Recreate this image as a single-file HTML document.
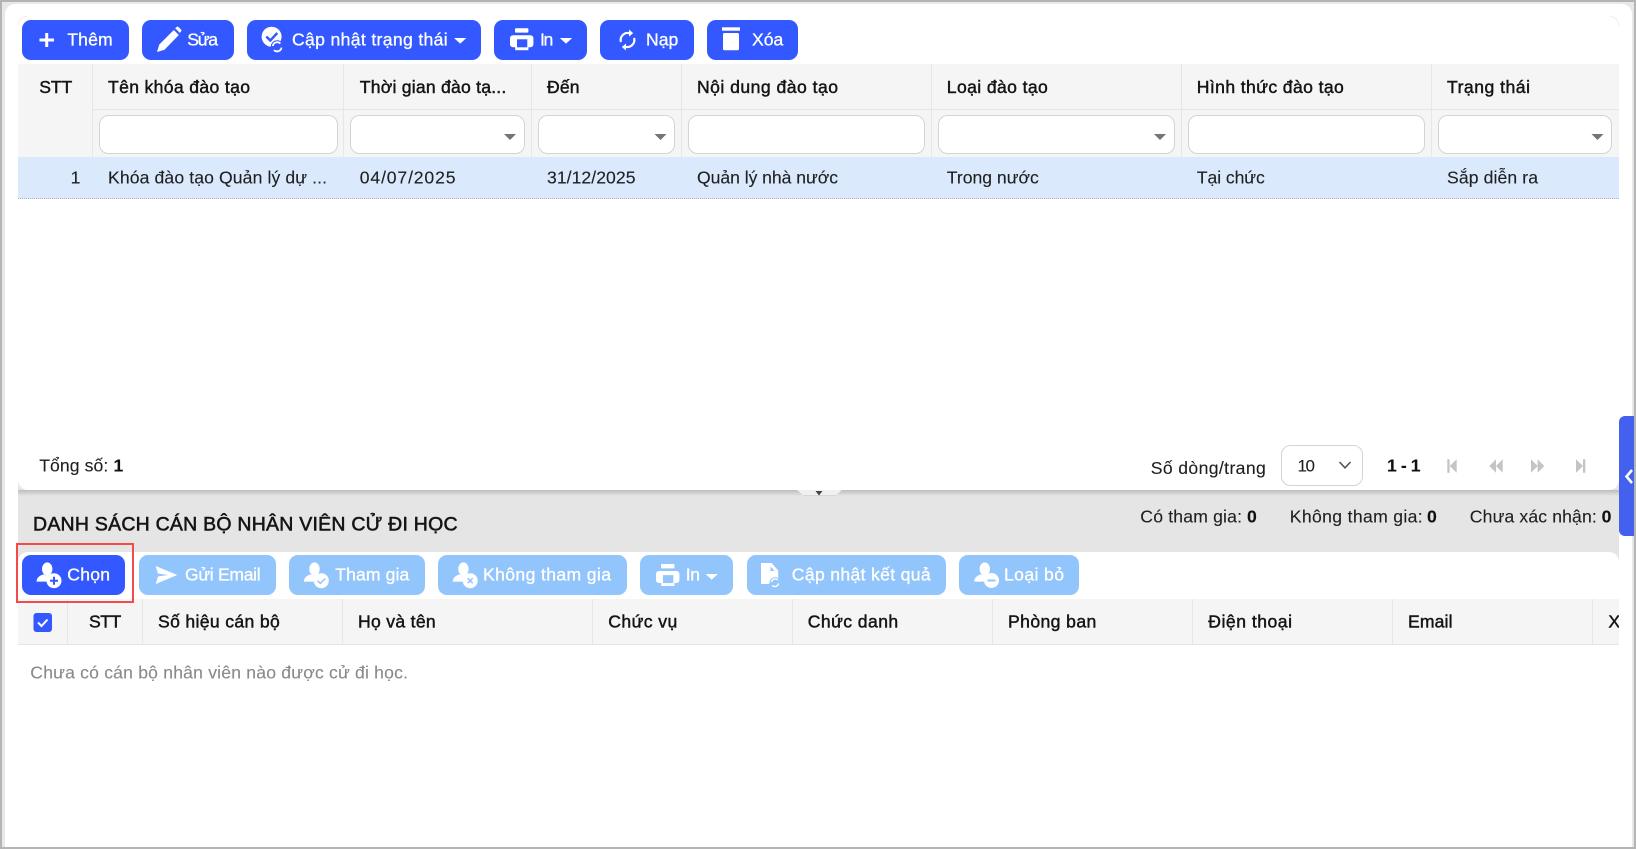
<!DOCTYPE html>
<html lang="vi"><head><meta charset="utf-8"><title>Khóa đào tạo</title>
<style>
html,body{margin:0;padding:0;width:1636px;height:849px;overflow:hidden;background:#fff}
svg{display:block}
text{font-family:"Liberation Sans","Noto Sans CJK SC",sans-serif;font-size:17.6px;fill:#1f1f1f;stroke:#1f1f1f;stroke-width:.12px}
.m{stroke:#141414;stroke-width:.45px;fill:#141414}
.b{font-weight:700;fill:#111;stroke:#111;stroke-width:.1px}
.w{fill:#fff;stroke:#fff;stroke-width:.3px}
.ln{stroke:#e6e6e6;stroke-width:1}
.in{fill:#fff;stroke:#d4d4d4;stroke-width:1}
.cr{fill:#757575}
.pg{fill:#c4c4c4}
</style></head><body>
<svg xmlns="http://www.w3.org/2000/svg" width="1636" height="849" viewBox="0 0 1636 849">
<defs>
<clipPath id="cl"><rect x="18" y="599" width="1601" height="47"/></clipPath>
<g id="person" fill="#fff"><ellipse cx="47.200" cy="569" rx="5.200" ry="6.600"/><path d="M36.500 581.600c.4-4 3-6.200 7.200-7.200 1.500 1.400 5 1.400 6.500.4l2 1.200c-2.600 1.400-3.600 3.400-3.600 5.600z"/></g>
<g id="print" fill="#fff"><rect x="0" y="7" width="23.400" height="12" rx="3"/><rect x="5" y="0" width="13.400" height="4.400" rx=".8"/><rect x="5.200" y="9.600" width="13.200" height="12.400"/></g>
<linearGradient id="sh" x1="0" y1="0" x2="0" y2="1"><stop offset="0" stop-color="#bdbdbd"/><stop offset="1" stop-color="#e5e5e5"/></linearGradient>
</defs>

<!-- page frame -->
<rect width="1636" height="849" fill="#b4b4b4"/>
<rect x="2" y="2" width="1632" height="845" fill="#e8e8e8"/>
<path d="M15 4H1622a10 10 0 0 1 10 10V847H5V14A10 10 0 0 1 15 4z" fill="#fff"/>
<path d="M18 26a10 10 0 0 1 10-10M1609 16a10 10 0 0 1 10 10" fill="none" stroke="#efefef"/>

<!-- top toolbar -->
<g fill="#3358ff">
<rect x="22" y="20" width="107" height="40" rx="9"/>
<rect x="142" y="20" width="92" height="40" rx="9"/>
<rect x="247" y="20" width="234" height="40" rx="9"/>
<rect x="494" y="20" width="93" height="40" rx="9"/>
<rect x="600" y="20" width="94" height="40" rx="9"/>
<rect x="707" y="20" width="91" height="40" rx="9"/>
</g>
<path d="M39.500 40H54M46.700 33v14" stroke="#fff" stroke-width="3" fill="none"/>
<text class="w" x="67.300" y="45.500" textLength="45.400" lengthAdjust="spacing">Thêm</text>
<path d="M157 52l2.300-7.500L173.800 30l5 5L164.500 49.700z" fill="#fff"/>
<path d="M175.200 28.200l1.400-1.200q1-.7 1.900 0l2.600 2.600q.8.900 0 1.900l-1.300 1.400z" fill="#fff"/>
<text class="w" x="187.300" y="45.500" textLength="30.700" lengthAdjust="spacing">Sửa</text>
<circle cx="271.600" cy="36.700" r="10" fill="#fff"/>
<path d="M266.300 36.500l4 4 7-7.500" stroke="#3358ff" stroke-width="2.400" fill="none"/>
<circle cx="277.200" cy="46.800" r="6.500" fill="#3358ff"/>
<path d="M272.800 46a4.500 4.500 0 0 1 7.600-2.500M281.500 47.600a4.500 4.500 0 0 1-7.600 2.500" stroke="#fff" stroke-width="1.800" fill="none"/>
<text class="w" x="292" y="45.500" textLength="155.700" lengthAdjust="spacing">Cập nhật trạng thái</text>
<path d="M454 38h12.400l-6.200 5.600z" fill="#fff"/>
<use href="#print" x="510" y="28.200"/>
<rect x="517" y="39.300" width="10.300" height="8" fill="#3358ff"/>
<text class="w" x="540" y="45.500" textLength="13.300" lengthAdjust="spacing">In</text>
<path d="M559.800 38h12.400l-6.200 5.600z" fill="#fff"/>
<path d="M621 42A7 7 0 0 1 629.500 33.200M634 38A7 7 0 0 1 625.500 46.800" stroke="#fff" stroke-width="2.200" fill="none"/>
<path d="M629 29.500l4.200 3.600-4.200 3.500zM626 43.500l-4.200 3.500 4.200 3.500z" fill="#fff"/>
<text class="w" x="646" y="45.500" textLength="32.300" lengthAdjust="spacing">Nạp</text>
<rect x="722" y="27.300" width="18" height="3.400" fill="#fff"/>
<rect x="723" y="33" width="16" height="17.300" rx="1.500" fill="#fff"/>
<text class="w" x="752" y="45.500" textLength="31.300" lengthAdjust="spacing">Xóa</text>

<!-- table 1 -->
<rect x="18" y="64" width="1601" height="93" fill="#f5f5f5"/>
<rect x="18" y="157" width="1601" height="42" fill="#dbe9fd"/>
<path d="M18 198.500H1619" stroke="#a9b6c6" stroke-dasharray="1 1"/>
<path class="ln" d="M92.500 64V157M343.500 64V157M531.500 64V157M681.500 64V157M931.500 64V157M1181.500 64V157M1431.500 64V157M92.500 109.500H1619"/>
<text class="m" x="39.200" y="93" textLength="33" lengthAdjust="spacing">STT</text>
<text class="m" x="108" y="93" textLength="142" lengthAdjust="spacing">Tên khóa đào tạo</text>
<text class="m" x="359.800" y="93" textLength="146.500" lengthAdjust="spacing">Thời gian đào tạ...</text>
<text class="m" x="547" y="93" textLength="32.500" lengthAdjust="spacing">Đến</text>
<text class="m" x="697" y="93" textLength="141" lengthAdjust="spacing">Nội dung đào tạo</text>
<text class="m" x="946.800" y="93" textLength="101" lengthAdjust="spacing">Loại đào tạo</text>
<text class="m" x="1196.800" y="93" textLength="147" lengthAdjust="spacing">Hình thức đào tạo</text>
<text class="m" x="1447" y="93" textLength="83" lengthAdjust="spacing">Trạng thái</text>
<rect class="in" x="99.500" y="115.500" width="238" height="38" rx="9"/>
<rect class="in" x="350.500" y="115.500" width="174" height="38" rx="9"/>
<rect class="in" x="538.500" y="115.500" width="136" height="38" rx="9"/>
<rect class="in" x="688.500" y="115.500" width="236" height="38" rx="9"/>
<rect class="in" x="938.500" y="115.500" width="236" height="38" rx="9"/>
<rect class="in" x="1188.500" y="115.500" width="236" height="38" rx="9"/>
<rect class="in" x="1438.500" y="115.500" width="173" height="38" rx="9"/>
<path class="cr" d="M504 134h12l-6 6zM654.500 134h12l-6 6zM1154 134h12l-6 6zM1591.500 134h12l-6 6z"/>
<text x="70.600" y="183.500" textLength="7.400" lengthAdjust="spacing">1</text>
<text x="108" y="183.500" textLength="219" lengthAdjust="spacing">Khóa đào tạo Quản lý dự ...</text>
<text x="359.800" y="183.500" textLength="95.700" lengthAdjust="spacing">04/07/2025</text>
<text x="547" y="183.500" textLength="88.500" lengthAdjust="spacing">31/12/2025</text>
<text x="697" y="183.500" textLength="141" lengthAdjust="spacing">Quản lý nhà nước</text>
<text x="946.800" y="183.500" textLength="92" lengthAdjust="spacing">Trong nước</text>
<text x="1196.800" y="183.500" textLength="68" lengthAdjust="spacing">Tại chức</text>
<text x="1447" y="183.500" textLength="91" lengthAdjust="spacing">Sắp diễn ra</text>

<!-- gray band + lower panel -->
<rect x="18" y="480" width="1601" height="90" fill="#e5e5e5"/>
<rect x="18" y="490" width="1601" height="6" fill="url(#sh)"/>
<path d="M18 476H1619V480A10 10 0 0 1 1609 490H28A10 10 0 0 1 18 480z" fill="#fff"/>
<path d="M797 490H842L836 495H803z" fill="#f0f0f0"/>
<path d="M803 495.500H836" stroke="#d6d6d6"/>
<path d="M815.500 491h7l-3.500 4.500z" fill="#444"/>
<path d="M18 562a10 10 0 0 1 10-10H1609a10 10 0 0 1 10 10V600H18z" fill="#fff"/>

<!-- pagination -->
<text x="39.200" y="471.500" textLength="69.100" lengthAdjust="spacing">Tổng số:</text>
<text class="b" x="113.500" y="471.500" textLength="7.800" lengthAdjust="spacing">1</text>
<text x="1150.700" y="474" textLength="115.100" lengthAdjust="spacing">Số dòng/trang</text>
<rect x="1281.500" y="445.500" width="81" height="40" rx="9" fill="#fff" stroke="#d4d4d4"/>
<text x="1297.500" y="471.500" style="font-size:17px" textLength="17.500" lengthAdjust="spacing">10</text>
<path d="M1339.500 462l5.500 5.800 5.500-5.800" fill="none" stroke="#555" stroke-width="1.600"/>
<text class="b" x="1387" y="471.500" textLength="33.600" lengthAdjust="spacing">1 - 1</text>
<path class="pg" d="M1447.300 459.300h2.300v13.400h-2.300zM1456.700 459.300v13.400l-7-6.700z"/>
<path class="pg" d="M1496 459.300v13.400l-6.700-6.700zM1502.700 459.300v13.400l-6.700-6.700z"/>
<path class="pg" d="M1531 459.300v13.400l6.700-6.700zM1537.600 459.300v13.400l6.700-6.700z"/>
<path class="pg" d="M1576 459.300v13.400l7-6.700zM1583 459.300h2.300v13.400H1583z"/>

<!-- title + stats -->
<text class="m" style="font-size:19.500px;stroke-width:.55px" x="33" y="530.700" textLength="424.600" lengthAdjust="spacing">DANH SÁCH CÁN BỘ NHÂN VIÊN CỬ ĐI HỌC</text>
<text x="1140.300" y="522.700" textLength="101.700" lengthAdjust="spacing">Có tham gia:</text>
<text class="b" x="1247" y="522.700" textLength="11" lengthAdjust="spacing">0</text>
<text x="1289.800" y="522.700" textLength="132.900" lengthAdjust="spacing">Không tham gia:</text>
<text class="b" x="1427" y="522.700" textLength="11" lengthAdjust="spacing">0</text>
<text x="1469.800" y="522.700" textLength="127" lengthAdjust="spacing">Chưa xác nhận:</text>
<text class="b" x="1601.600" y="522.700" textLength="10.600" lengthAdjust="spacing">0</text>

<!-- lower toolbar -->
<g fill="#93c5fd">
<rect x="139" y="555" width="137" height="40" rx="9"/>
<rect x="289" y="555" width="136" height="40" rx="9"/>
<rect x="438" y="555" width="189" height="40" rx="9"/>
<rect x="640" y="555" width="93" height="40" rx="9"/>
<rect x="747" y="555" width="199" height="40" rx="9"/>
<rect x="959" y="555" width="120" height="40" rx="9"/>
</g>
<rect x="22" y="555" width="103" height="40" rx="9" fill="#3358ff"/>

<use href="#person"/>
<circle cx="54" cy="580.700" r="7.500" fill="#fff"/>
<path d="M50 580.700h8M54 576.700v8" stroke="#3358ff" stroke-width="2" fill="none"/>
<text class="w" x="67.300" y="580.700" textLength="42.700" lengthAdjust="spacing">Chọn</text>

<path d="M155.700 566L177.300 575 155.700 584 158 576.500 168 575 158 573.500z" fill="#fff"/>
<text class="w" x="185" y="580.700" textLength="75.700" lengthAdjust="spacing">Gửi Email</text>

<use href="#person" x="267.300"/>
<circle cx="321.300" cy="580.700" r="7.500" fill="#fff"/>
<path d="M317.500 580.700l2.800 2.800 5-5" stroke="#93c5fd" stroke-width="1.500" fill="none"/>
<text class="w" x="335.300" y="580.700" textLength="74" lengthAdjust="spacing">Tham gia</text>

<use href="#person" x="416.200"/>
<circle cx="470.200" cy="580.700" r="7.500" fill="#fff"/>
<path d="M467.700 578.200l5 5M472.700 578.200l-5 5" stroke="#93c5fd" stroke-width="1.500" fill="none"/>
<text class="w" x="483" y="580.700" textLength="128" lengthAdjust="spacing">Không tham gia</text>

<use href="#print" x="656" y="564"/>
<rect x="663" y="575.100" width="10.300" height="8" fill="#93c5fd"/>
<text class="w" x="685.800" y="580.700" textLength="14.200" lengthAdjust="spacing">In</text>
<path d="M705.500 574h12.400l-6.200 5.600z" fill="#fff"/>

<path d="M761 563h10.500l6.700 7.500V584H761z" fill="#fff"/>
<path d="M770.500 566.500l4.200 4.500h-4.200z" fill="#93c5fd"/>
<circle cx="775" cy="582.700" r="5.500" fill="#93c5fd"/>
<path d="M771.500 582a3.700 3.700 0 0 1 6.300-2M778.500 583.400a3.700 3.700 0 0 1-6.300 2" stroke="#fff" stroke-width="1.400" fill="none"/>
<text class="w" x="791.800" y="580.700" textLength="138.900" lengthAdjust="spacing">Cập nhật kết quả</text>

<use href="#person" x="937.600"/>
<circle cx="991.500" cy="580.500" r="7.500" fill="#fff"/>
<path d="M987.500 580.500h8" stroke="#93c5fd" stroke-width="2" fill="none"/>
<text class="w" x="1004" y="580.700" textLength="60" lengthAdjust="spacing">Loại bỏ</text>

<!-- table 2 -->
<rect x="18" y="599" width="1601" height="46" fill="#f5f5f5"/>
<path class="ln" d="M67.500 599V645M142.500 599V645M342.500 599V645M592.500 599V645M792.500 599V645M992.500 599V645M1192.500 599V645M1392.500 599V645M1592.500 599V645M18 644.500H1619"/>
<rect x="33.500" y="613" width="18.500" height="19" rx="3" fill="#3358ff"/>
<path d="M38 622.500l3.500 3.500 6-6.500" stroke="#fff" stroke-width="2" fill="none"/>
<text class="m" x="89" y="627.500" textLength="32.300" lengthAdjust="spacing">STT</text>
<text class="m" x="158" y="627.500" textLength="121.800" lengthAdjust="spacing">Số hiệu cán bộ</text>
<text class="m" x="358" y="627.500" textLength="77.700" lengthAdjust="spacing">Họ và tên</text>
<text class="m" x="608.300" y="627.500" textLength="69" lengthAdjust="spacing">Chức vụ</text>
<text class="m" x="807.800" y="627.500" textLength="90.400" lengthAdjust="spacing">Chức danh</text>
<text class="m" x="1008" y="627.500" textLength="88.300" lengthAdjust="spacing">Phòng ban</text>
<text class="m" x="1208.300" y="627.500" textLength="83.700" lengthAdjust="spacing">Điện thoại</text>
<text class="m" x="1408" y="627.500" textLength="44.500" lengthAdjust="spacing">Email</text>
<text class="m" x="1608.400" y="627.500" clip-path="url(#cl)">X</text>
<text style="fill:#8a8a8a;stroke:#8a8a8a" x="30.300" y="678.300" textLength="377.700" lengthAdjust="spacing">Chưa có cán bộ nhân viên nào được cử đi học.</text>

<!-- highlight box -->
<rect x="17" y="544" width="116" height="58" fill="none" stroke="#f44a4a" stroke-width="2"/>

<!-- side tab -->
<path d="M1625 416H1636V536H1625a6 6 0 0 1-6-6V422a6 6 0 0 1 6-6z" fill="#4361ee"/>
<path d="M1632 470l-5.500 6.500 5.500 6.500" fill="none" stroke="#fff" stroke-width="2.600"/>
<rect x="1634" y="0" width="2" height="849" fill="#b4b4b4"/>
</svg>
</body></html>
